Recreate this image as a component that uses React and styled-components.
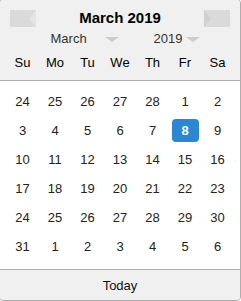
import React from "react";
import styled, { createGlobalStyle } from "styled-components";

const GlobalStyle = createGlobalStyle`
  html, body {
    margin: 0;
    padding: 0;
    background: #ffffff;
    overflow: hidden;
  }
  body {
    font-family: "Liberation Sans", Arial, sans-serif;
  }
`;

const Calendar = styled.div`
  width: 242px;
  height: 302px;
  box-sizing: border-box;
  margin: -1px 0 0 -1px;
  border: 1px solid #aeaeae;
  border-radius: 4px;
  background: #fff;
  display: flex;
  flex-direction: column;
  overflow: hidden;
  color: #000;
`;

const Header = styled.div`
  background: #f0f0f0;
  border-bottom: 1px solid #aeaeae;
  padding: 10px 0 6px;
`;

const TopRow = styled.div`
  height: 17px;
  display: flex;
  align-items: center;
  justify-content: space-between;
  padding: 0 10px;
`;

const Title = styled.div`
  font-size: 15px;
  font-weight: bold;
  line-height: 17px;
  margin-top: -3px;
  color: #000;
`;

const NavButton = styled.button`
  width: 26px;
  height: 17px;
  padding: 0;
  border: 0;
  background: none;
  display: block;
  cursor: pointer;
  svg {
    display: block;
  }
`;

const DropRow = styled.div`
  margin-top: 4px;
  height: 15px;
  display: flex;
  justify-content: center;
  align-items: center;
  gap: 35px;
  padding-left: 10px;
`;

const Dropdown = styled.div`
  width: ${(p) => p.$width}px;
  display: flex;
  align-items: center;
  justify-content: space-between;
  font-size: 13px;
  line-height: 15px;
  color: #333;
`;

const Caret = styled.span`
  width: 0;
  height: 0;
  border-left: 7px solid transparent;
  border-right: 7px solid transparent;
  border-top: 5px solid #cccccc;
  margin-top: 2px;
`;

const Grid = styled.div`
  display: grid;
  grid-template-columns: repeat(7, 32.5px);
  justify-content: center;
`;

const DayName = styled.div`
  height: 23px;
  line-height: 23px;
  text-align: center;
  font-size: 13px;
  color: #000;
`;

const Names = styled(Grid)`
  margin-top: 5px;
`;

const Body = styled.div`
  flex: 1;
  padding: 6px 0 8px;
`;

const Day = styled.div`
  width: 27px;
  height: 23px;
  line-height: 23px;
  margin: 3px auto;
  text-align: center;
  font-size: 13px;
  border-radius: 4px;
  color: ${(p) => (p.$selected ? "#fff" : "#222")};
  background: ${(p) => (p.$selected ? "#2c87d2" : "transparent")};
  font-weight: ${(p) => (p.$selected ? "bold" : "normal")};
`;

const Footer = styled.div`
  height: 30px;
  border-top: 1px solid #aeaeae;
  background: #f0f0f0;
  display: flex;
  align-items: center;
  justify-content: center;
  font-size: 13px;
  color: #111;
`;

const PrevIcon = () => (
  <svg width="26" height="17" viewBox="0 0 26 17">
    <rect x="0" y="0" width="26" height="17" fill="#dadada" />
    <polygon points="26,0 19,8.5 26,17" fill="#e4e4e4" />
  </svg>
);

const NextIcon = () => (
  <svg width="26" height="17" viewBox="0 0 26 17">
    <rect x="0" y="0" width="26" height="17" fill="#dadada" />
    <polygon points="0,0 7,8.5 0,17" fill="#d0d0d0" />
  </svg>
);

const dayNames = ["Su", "Mo", "Tu", "We", "Th", "Fr", "Sa"];

const days = [
  24, 25, 26, 27, 28, 1, 2,
  3, 4, 5, 6, 7, 8, 9,
  10, 11, 12, 13, 14, 15, 16,
  17, 18, 19, 20, 21, 22, 23,
  24, 25, 26, 27, 28, 29, 30,
  31, 1, 2, 3, 4, 5, 6,
];

export default function App() {
  return (
    <>
      <GlobalStyle />
      <Calendar>
        <Header>
          <TopRow>
            <NavButton aria-label="Previous month"><PrevIcon /></NavButton>
            <Title>March 2019</Title>
            <NavButton aria-label="Next month"><NextIcon /></NavButton>
          </TopRow>
          <DropRow>
            <Dropdown $width={68}>
              <span>March</span>
              <Caret />
            </Dropdown>
            <Dropdown $width={46}>
              <span>2019</span>
              <Caret />
            </Dropdown>
          </DropRow>
          <Names>
            {dayNames.map((d) => (
              <DayName key={d}>{d}</DayName>
            ))}
          </Names>
        </Header>
        <Body>
          <Grid>
            {days.map((d, i) => (
              <Day key={i} $selected={i === 12}>{d}</Day>
            ))}
          </Grid>
        </Body>
        <Footer>Today</Footer>
      </Calendar>
    </>
  );
}
